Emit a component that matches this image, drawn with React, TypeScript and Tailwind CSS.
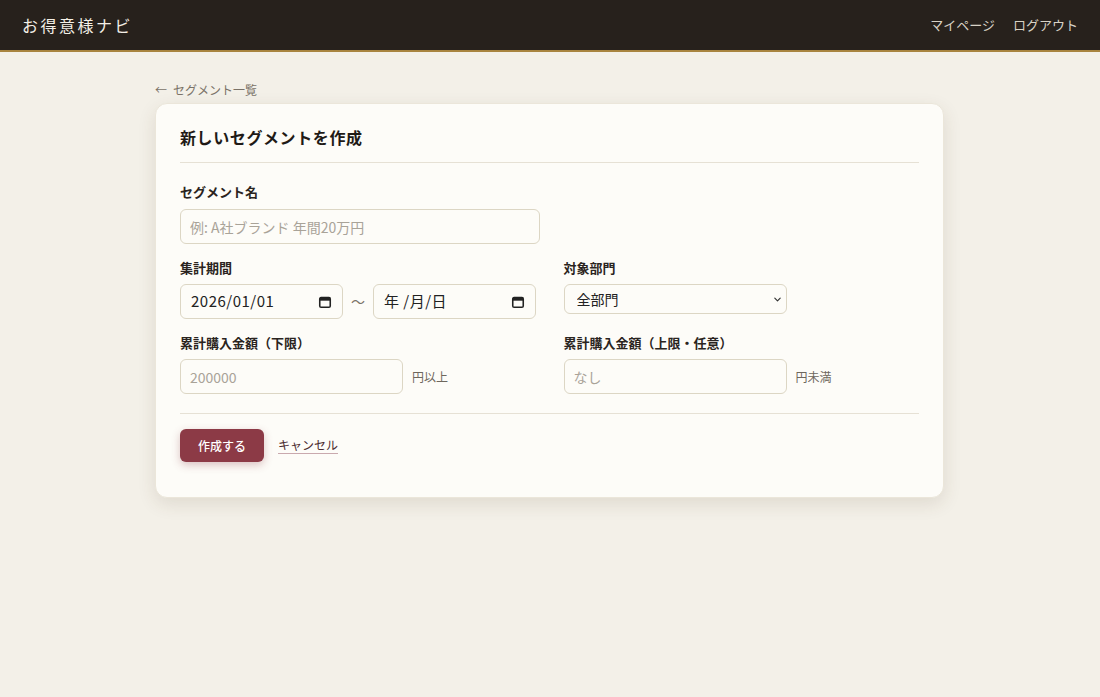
import React from 'react';

const jp = { fontFamily: '"Noto Sans CJK JP", "Noto Sans", sans-serif' };

const Label = ({ children }: { children: React.ReactNode }) => (
  <label className="block text-[13px] font-bold text-[#2a2420] mb-[6px] leading-5">{children}</label>
);

const CalendarIcon = () => (
  <svg width="14" height="14" viewBox="0 0 16 16" fill="none" className="shrink-0">
    <rect x="2" y="3" width="12" height="11" rx="1.5" stroke="#222" strokeWidth="1.8" />
    <rect x="2" y="3" width="12" height="3.5" fill="#222" />
  </svg>
);

const DateBox = ({ value }: { value: string }) => (
  <div className="shrink-0 flex items-center justify-between w-[163px] h-[35px] px-[10px] rounded-md border border-[#dcd6c4] bg-[#fdfcf8]">
    <span className="text-[15px] tracking-[0.5px] text-[#222]">{value}</span>
    <CalendarIcon />
  </div>
);

const inputCls =
  'h-[35px] px-[9px] rounded-md border border-[#dcd6c4] bg-[#fdfcf8] text-[14px] placeholder:text-[#a9a398] outline-none';

export default function App() {
  return (
    <div className="min-h-[697px] bg-[#f3f0e8]" style={jp}>
      <header className="h-[52px] bg-[#27211c] border-b-2 border-[#a8843f] flex items-center justify-between px-[22px]">
        <div className="text-[16px] tracking-[2.5px] text-[#f4efe6]">お得意様ナビ</div>
        <nav className="flex items-center gap-[18px] text-[13px] text-[#d8d2c6]">
          <a>マイページ</a>
          <a>ログアウト</a>
        </nav>
      </header>

      <main className="w-[789px] ml-[155px] pt-[28px]">
        <a className="flex gap-[6px] text-[12px] text-[#7a7267] leading-5 mb-[3px]">
          <span>←</span>
          <span>セグメント一覧</span>
        </a>

        <div className="bg-[#fdfcf8] rounded-xl border border-[#ebe6da] shadow-[0_6px_18px_rgba(80,60,30,0.12)] px-6 pt-[21px] pb-[35px]">
          <h1 className="text-[16px] font-bold text-[#1f1a16] leading-6 pb-[13px] border-b border-[#e6e1d5] tracking-[0.6px]">
            新しいセグメントを作成
          </h1>

          <div className="mt-[19px]">
            <Label>セグメント名</Label>
            <input className={`${inputCls} w-[360px] mt-[1px]`} placeholder="例: A社ブランド 年間20万円" />
          </div>

          <div className="grid grid-cols-2 gap-x-6 mt-[14px]">
            <div>
              <Label>集計期間</Label>
              <div className="flex items-center gap-[8px]">
                <DateBox value="2026/01/01" />
                <span className="w-[14px] text-[14px] text-[#7a7267]">〜</span>
                <DateBox value="年 /月/日" />
              </div>
            </div>
            <div className="pl-[2px]">
              <Label>対象部門</Label>
              <div className="relative w-[223px]">
                <select className="appearance-none w-[223px] h-[30px] px-[12px] rounded-md border border-[#dcd6c4] bg-[#fdfcf8] text-[14px] text-[#222] outline-none">
                  <option>全部門</option>
                </select>
                <svg
                  width="9"
                  height="9"
                  viewBox="0 0 10 10"
                  className="absolute right-[5px] top-[11px] pointer-events-none"
                  fill="none"
                >
                  <path d="M2 3.5l3 3 3-3" stroke="#333" strokeWidth="1.3" strokeLinecap="round" strokeLinejoin="round" />
                </svg>
              </div>
            </div>
          </div>

          <div className="grid grid-cols-2 gap-x-6 mt-[14px]">
            <div>
              <Label>累計購入金額（下限）</Label>
              <div className="flex items-center gap-[9px]">
                <input className={`${inputCls} w-[223px]`} placeholder="200000" />
                <span className="text-[12px] text-[#6e675d]">円以上</span>
              </div>
            </div>
            <div className="pl-[2px]">
              <Label>累計購入金額（上限・任意）</Label>
              <div className="flex items-center gap-[9px]">
                <input className={`${inputCls} w-[223px]`} placeholder="なし" />
                <span className="text-[12px] text-[#6e675d]">円未満</span>
              </div>
            </div>
          </div>

          <div className="mt-[19px] pt-[15px] border-t border-[#e6e1d5] flex items-center gap-[14px]">
            <button className="h-[33px] px-[18px] rounded-md bg-[#8c3a46] text-white text-[12px] font-medium shadow-[0_3px_8px_rgba(140,58,70,0.3)]">
              作成する
            </button>
            <a className="text-[12px] text-[#4a2a2e] border-b border-[#c9a9ae] leading-4">キャンセル</a>
          </div>
        </div>
      </main>
    </div>
  );
}
